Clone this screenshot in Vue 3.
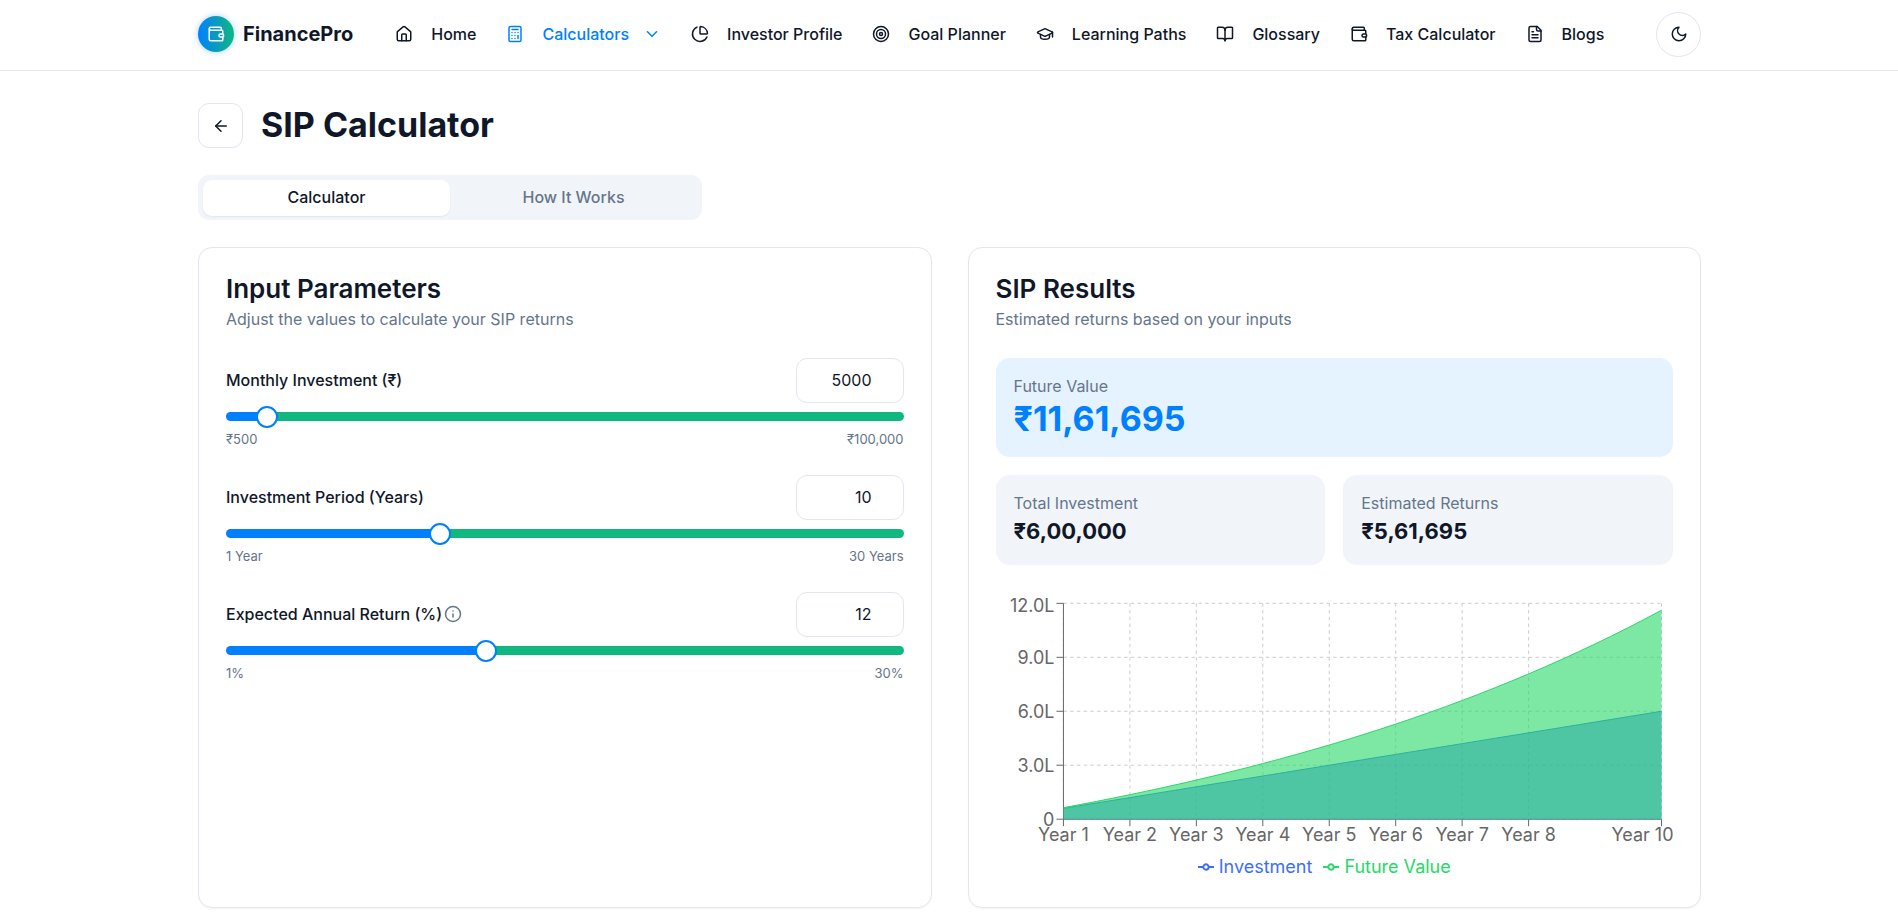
<script setup>
import { ref, reactive, computed, onMounted, onBeforeUnmount } from 'vue'

const icons = {
  home: ['M15 21v-8a1 1 0 0 0-1-1h-4a1 1 0 0 0-1 1v8', 'M3 10a2 2 0 0 1 .709-1.528l7-5.999a2 2 0 0 1 2.582 0l7 5.999A2 2 0 0 1 21 10v9a2 2 0 0 1-2 2H5a2 2 0 0 1-2-2z'],
  calculator: ['M6 2h12a2 2 0 0 1 2 2v16a2 2 0 0 1-2 2H6a2 2 0 0 1-2-2V4a2 2 0 0 1 2-2z', 'M8 6h8', 'M16 14v4', 'M16 10h.01', 'M12 10h.01', 'M8 10h.01', 'M12 14h.01', 'M8 14h.01', 'M12 18h.01', 'M8 18h.01'],
  pie: ['M21 12c.552 0 1.005-.449.95-.998a10 10 0 0 0-8.953-8.951c-.55-.055-.998.398-.998.95v8a1 1 0 0 0 1 1z', 'M21.21 15.89A10 10 0 1 1 8 2.83'],
  target: ['M2 12a10 10 0 1 0 20 0a10 10 0 1 0-20 0', 'M6 12a6 6 0 1 0 12 0a6 6 0 1 0-12 0', 'M10 12a2 2 0 1 0 4 0a2 2 0 1 0-4 0'],
  cap: ['M21.42 10.922a1 1 0 0 0-.019-1.838L12.83 5.18a2 2 0 0 0-1.66 0L2.6 9.08a1 1 0 0 0 0 1.832l8.57 3.908a2 2 0 0 0 1.66 0z', 'M22 10v6', 'M6 12.5V16a6 3 0 0 0 12 0v-3.5'],
  book: ['M12 7v14', 'M3 18a1 1 0 0 1-1-1V4a1 1 0 0 1 1-1h5a4 4 0 0 1 4 4 4 4 0 0 1 4-4h5a1 1 0 0 1 1 1v13a1 1 0 0 1-1 1h-6a3 3 0 0 0-3 3 3 3 0 0 0-3-3z'],
  wallet: ['M19 7V4a1 1 0 0 0-1-1H5a2 2 0 0 0 0 4h15a1 1 0 0 1 1 1v4h-3a2 2 0 0 0 0 4h3a1 1 0 0 0 1-1v-2a1 1 0 0 0-1-1', 'M3 5v14a2 2 0 0 0 2 2h15a1 1 0 0 0 1-1v-4'],
  file: ['M15 2H6a2 2 0 0 0-2 2v16a2 2 0 0 0 2 2h12a2 2 0 0 0 2-2V7Z', 'M14 2v4a2 2 0 0 0 2 2h4', 'M10 9H8', 'M16 13H8', 'M16 17H8'],
}

const nav = [
  { label: 'Home', icon: 'home' },
  { label: 'Calculators', icon: 'calculator', active: true },
  { label: 'Investor Profile', icon: 'pie' },
  { label: 'Goal Planner', icon: 'target' },
  { label: 'Learning Paths', icon: 'cap' },
  { label: 'Glossary', icon: 'book' },
  { label: 'Tax Calculator', icon: 'wallet' },
  { label: 'Blogs', icon: 'file' },
]

const tab = ref('calculator')

const fields = reactive([
  { id: 'monthly', label: 'Monthly Investment (₹)', value: 5000, min: 500, max: 100000, step: 500, low: '₹500', high: '₹100,000' },
  { id: 'years', label: 'Investment Period (Years)', value: 10, min: 1, max: 30, step: 1, low: '1 Year', high: '30 Years' },
  { id: 'rate', label: 'Expected Annual Return (%)', value: 12, min: 1, max: 30, step: 1, low: '1%', high: '30%', info: true },
])

const percent = (f) => ((f.value - f.min) / (f.max - f.min)) * 100

const futureAt = (y) => {
  const i = fields[2].value / 1200
  return (fields[0].value * (Math.pow(1 + i, y * 12) - 1) * (1 + i)) / i
}
const investedAt = (y) => fields[0].value * 12 * y
const rupees = (n) => '₹' + Math.round(n).toLocaleString('en-IN')

const years = computed(() => Math.max(2, Number(fields[1].value)))
const future = computed(() => futureAt(years.value))
const invested = computed(() => investedAt(years.value))

const chartBox = ref(null)
const chartWidth = ref(678)
let observer
onMounted(() => {
  observer = new ResizeObserver(([entry]) => { chartWidth.value = Math.round(entry.contentRect.width) })
  observer.observe(chartBox.value)
})
onBeforeUnmount(() => observer.disconnect())

const plot = { left: 67.5, top: 11.25, bottom: 227.25 }
const right = computed(() => chartWidth.value - 12)
const step = computed(() => {
  const raw = future.value / 4
  const unit = Math.pow(10, Math.floor(Math.log10(raw)))
  return Math.ceil(raw / unit) * unit
})
const xOf = (y) => plot.left + ((y - 1) / (years.value - 1)) * (right.value - plot.left)
const yOf = (v) => plot.bottom - (v / (step.value * 4)) * (plot.bottom - plot.top)

const yTicks = computed(() => [0, 1, 2, 3, 4].map((k) => ({
  y: yOf(k * step.value),
  text: k ? (k * step.value / 100000).toFixed(1) + 'L' : '0',
})))
const xTicks = computed(() => {
  const n = years.value
  const gap = (right.value - plot.left) / (n - 1)
  const every = Math.ceil(60 / gap)
  const list = []
  for (let y = 1; y < n; y += every) {
    if (xOf(y) + 30 < chartWidth.value - 60) list.push({ x: xOf(y), text: 'Year ' + y })
  }
  list.push({ x: right.value, text: 'Year ' + n, last: true })
  return list
})
const trace = (fn) => {
  const points = []
  const count = (years.value - 1) * 4
  for (let k = 0; k <= count; k++) {
    const y = 1 + k / 4
    points.push(xOf(y).toFixed(2) + ',' + yOf(fn(y)).toFixed(2))
  }
  return 'M' + points.join('L')
}
const close = (d) => `${d}L${right.value},${plot.bottom}L${plot.left},${plot.bottom}Z`
const investLine = computed(() => trace(investedAt))
const futureLine = computed(() => trace(futureAt))
</script>

<template>
  <div class="page">
    <header class="topbar">
      <div class="container topbar-row">
        <a href="#" class="brand">
          <span class="logo">
            <svg class="icon" viewBox="0 0 24 24"><path v-for="d in icons.wallet" :key="d" :d="d" /></svg>
          </span>
          FinancePro
        </a>
        <nav class="nav">
          <a v-for="item in nav" :key="item.label" href="#" class="nav-link" :class="{ active: item.active }">
            <svg class="icon" viewBox="0 0 24 24"><path v-for="d in icons[item.icon]" :key="d" :d="d" /></svg>
            {{ item.label }}
            <svg v-if="item.active" class="icon chevron" viewBox="0 0 24 24"><path d="m6 9 6 6 6-6" /></svg>
          </a>
        </nav>
        <button class="theme" type="button" aria-label="Toggle theme">
          <svg class="icon" viewBox="0 0 24 24"><path d="M12 3a6 6 0 0 0 9 9 9 9 0 1 1-9-9Z" /></svg>
        </button>
      </div>
    </header>

    <main class="container main">
      <div class="heading">
        <button class="back" type="button" aria-label="Back">
          <svg class="icon" viewBox="0 0 24 24"><path d="m12 19-7-7 7-7" /><path d="M19 12H5" /></svg>
        </button>
        <h1>SIP Calculator</h1>
      </div>

      <div class="tabs" role="tablist">
        <button type="button" role="tab" :aria-selected="tab === 'calculator'" :class="{ on: tab === 'calculator' }" @click="tab = 'calculator'">Calculator</button>
        <button type="button" role="tab" :aria-selected="tab === 'how'" :class="{ on: tab === 'how' }" @click="tab = 'how'">How It Works</button>
      </div>

      <div class="cards">
        <section class="card">
          <h2>Input Parameters</h2>
          <p class="desc">Adjust the values to calculate your SIP returns</p>
          <div class="fields">
            <div v-for="f in fields" :key="f.id" class="field">
              <div class="field-top">
                <label :for="f.id">
                  {{ f.label }}
                  <svg v-if="f.info" class="icon info" viewBox="0 0 24 24"><circle cx="12" cy="12" r="10" /><path d="M12 16v-4" /><path d="M12 8h.01" /></svg>
                </label>
                <input :id="f.id" v-model.number="f.value" class="number" type="number" :min="f.min" :max="f.max">
              </div>
              <input v-model.number="f.value" class="range" type="range" :min="f.min" :max="f.max" :step="f.step" :aria-label="f.label" :style="{ '--fill': percent(f) + '%' }">
              <div class="limits"><span>{{ f.low }}</span><span>{{ f.high }}</span></div>
            </div>
          </div>
        </section>

        <section class="card">
          <h2>SIP Results</h2>
          <p class="desc">Estimated returns based on your inputs</p>
          <div class="results">
            <div class="stat total">
              <p>Future Value</p>
              <strong>{{ rupees(future) }}</strong>
            </div>
            <div class="stat">
              <p>Total Investment</p>
              <strong>{{ rupees(invested) }}</strong>
            </div>
            <div class="stat">
              <p>Estimated Returns</p>
              <strong>{{ rupees(future - invested) }}</strong>
            </div>
          </div>
          <div ref="chartBox" class="chart">
            <svg class="plot" :viewBox="`0 0 ${chartWidth} 261`">
              <g class="grid">
                <line v-for="t in yTicks" :key="'h' + t.text" :x1="plot.left" :x2="right" :y1="t.y" :y2="t.y" />
                <line v-for="t in xTicks" :key="'v' + t.text" :x1="t.x" :x2="t.x" :y1="plot.top" :y2="plot.bottom" />
              </g>
              <g class="axis">
                <line :x1="plot.left" :x2="right" :y1="plot.bottom" :y2="plot.bottom" />
                <line :x1="plot.left" :x2="plot.left" :y1="plot.top" :y2="plot.bottom" />
                <line v-for="t in yTicks" :key="'y' + t.text" :x1="plot.left - 7" :x2="plot.left" :y1="t.y" :y2="t.y" />
                <line v-for="t in xTicks" :key="'x' + t.text" :x1="t.x" :x2="t.x" :y1="plot.bottom" :y2="plot.bottom + 7" />
              </g>
              <g class="tick-text">
                <text v-for="t in yTicks" :key="'yt' + t.text" :x="plot.left - 9" :y="Math.max(t.y + 7, 20)" text-anchor="end">{{ t.text }}</text>
                <text v-for="t in xTicks" :key="'xt' + t.text" :x="t.last ? chartWidth : t.x" :y="plot.bottom + 22" :text-anchor="t.last ? 'end' : 'middle'">{{ t.text }}</text>
              </g>
              <path class="area blue" :d="close(investLine)" />
              <path class="line blue" :d="investLine" />
              <path class="area green" :d="close(futureLine)" />
              <path class="line green" :d="futureLine" />
            </svg>
            <div class="legend">
              <span class="blue"><svg viewBox="0 0 32 32"><path d="M0 16h10.7a5.3 5.3 0 1 1 10.6 0H32M21.3 16a5.3 5.3 0 1 1-10.6 0" /></svg>Investment</span>
              <span class="green"><svg viewBox="0 0 32 32"><path d="M0 16h10.7a5.3 5.3 0 1 1 10.6 0H32M21.3 16a5.3 5.3 0 1 1-10.6 0" /></svg>Future Value</span>
            </div>
          </div>
        </section>
      </div>
    </main>
  </div>
</template>

<style>
body { background: #fff; }
</style>

<style scoped>
* { box-sizing: border-box; margin: 0; }
.page {
  font-family: Inter, "Noto Sans", sans-serif;
  font-size: 16px;
  line-height: 22px;
  color: #0f1729;
}
button, input { font: inherit; color: inherit; }
button { padding: 0; cursor: pointer; }
a { color: inherit; text-decoration: none; }
.icon {
  width: 18px;
  height: 18px;
  flex: none;
  fill: none;
  stroke: currentColor;
  stroke-width: 2;
  stroke-linecap: round;
  stroke-linejoin: round;
}
.container { max-width: 1574px; margin: 0 auto; padding: 0 35px 0 36px; }

.topbar { border-bottom: 1px solid #e1e7ef; }
.topbar-row { display: flex; align-items: center; height: 70px; padding-bottom: 2px; }
.brand { display: flex; align-items: center; gap: 9px; font-size: 20px; font-weight: 700; }
.logo {
  display: flex;
  align-items: center;
  justify-content: center;
  width: 36px;
  height: 36px;
  border-radius: 50%;
  color: #fff;
  background: linear-gradient(90deg, #0080ff, #10b77f);
  box-shadow: 0 0 6px rgba(0, 128, 255, .35);
}
.nav { display: flex; gap: 30px; margin-left: 42px; font-weight: 500; white-space: nowrap; }
.nav-link { display: flex; align-items: center; gap: 18px; }
.nav-link.active { color: #0080ff; }
.chevron { margin-left: -4px; }
.theme, .back {
  display: flex;
  align-items: center;
  justify-content: center;
  width: 45px;
  height: 45px;
  flex: none;
  border: 1px solid #e1e7ef;
  background: #fff;
}
.theme { margin-left: auto; border-radius: 50%; }
.back { border-radius: 11px; }

.main { padding-top: 32px; padding-bottom: 9px; }
.heading { display: flex; align-items: center; gap: 18px; }
h1 { padding-bottom: 2px; font-size: 34px; line-height: 40px; font-weight: 700; }
.tabs {
  display: grid;
  grid-template-columns: 1fr 1fr;
  max-width: 504px;
  height: 45px;
  margin: 27px 0;
  padding: 5px 5px 4px;
  border-radius: 11px;
  background: #f1f5f9;
}
.tabs button { padding-bottom: 2px; border: 0; border-radius: 9px; background: none; font-weight: 500; color: #65758b; }
.tabs .on { background: #fff; color: #0f1729; box-shadow: 0 1px 2px rgba(0, 0, 0, .06); }

.cards { display: grid; grid-template-columns: 1fr 1fr; gap: 36px; }
.card {
  min-width: 0;
  padding: 27px;
  border: 1px solid #e1e7ef;
  border-radius: 14px;
  box-shadow: 0 1px 2px rgba(0, 0, 0, .05);
}
h2 { font-size: 26px; line-height: 27px; font-weight: 600; }
.desc { margin: 6px 0 28px; color: #65758b; }
.fields { display: grid; gap: 27px; }
.field-top { display: flex; align-items: center; justify-content: space-between; }
label { display: flex; align-items: center; gap: 2px; padding-bottom: 2px; font-weight: 500; }
.info { color: #65758b; }
.number {
  width: 108px;
  height: 45px;
  padding: 0 31px 2px 13px;
  border: 1px solid #e1e7ef;
  border-radius: 11px;
  background: #fff;
  text-align: right;
  appearance: textfield;
}
.number::-webkit-inner-spin-button { display: none; }
.range {
  display: block;
  width: 100%;
  height: 9px;
  margin: 9px 0;
  border-radius: 5px;
  appearance: none;
  background: linear-gradient(to right, #0080ff var(--fill), #10b77f var(--fill));
}
.range::-webkit-slider-thumb {
  width: 22px;
  height: 22px;
  border: 2px solid #0080ff;
  border-radius: 50%;
  background: #fff;
  appearance: none;
}
.limits { display: flex; justify-content: space-between; font-size: 13px; line-height: 18px; color: #65758b; }

.results { display: grid; grid-template-columns: 1fr 1fr; gap: 18px; }
.stat { padding: 18px; border-radius: 14px; background: #f1f5f9; }
.stat p { margin-bottom: 2px; line-height: 20px; color: #65758b; }
.stat strong { display: block; font-size: 22px; line-height: 32px; }
.total { grid-column: 1 / -1; background: #e5f2ff; }
.total strong { font-size: 34px; line-height: 41px; color: #0080ff; }

.chart { margin-top: 27px; }
.plot { display: block; width: 100%; height: 261px; overflow: visible; }
.grid line { stroke: #ccc; stroke-dasharray: 3.375; }
.axis line { stroke: #666; }
.tick-text { fill: #666; font-size: 18px; }
.blue { color: #3b6ffb; }
.green { color: #26d968; }
.area { fill: currentColor; fill-opacity: .6; }
.line { fill: none; stroke: currentColor; }
.legend { display: flex; justify-content: center; gap: 11px; padding-right: 20px; font-size: 18px; line-height: 27px; }
.legend span { display: flex; align-items: center; gap: 5px; }
.legend svg { width: 16px; height: 16px; fill: none; stroke: currentColor; stroke-width: 4; }
</style>
